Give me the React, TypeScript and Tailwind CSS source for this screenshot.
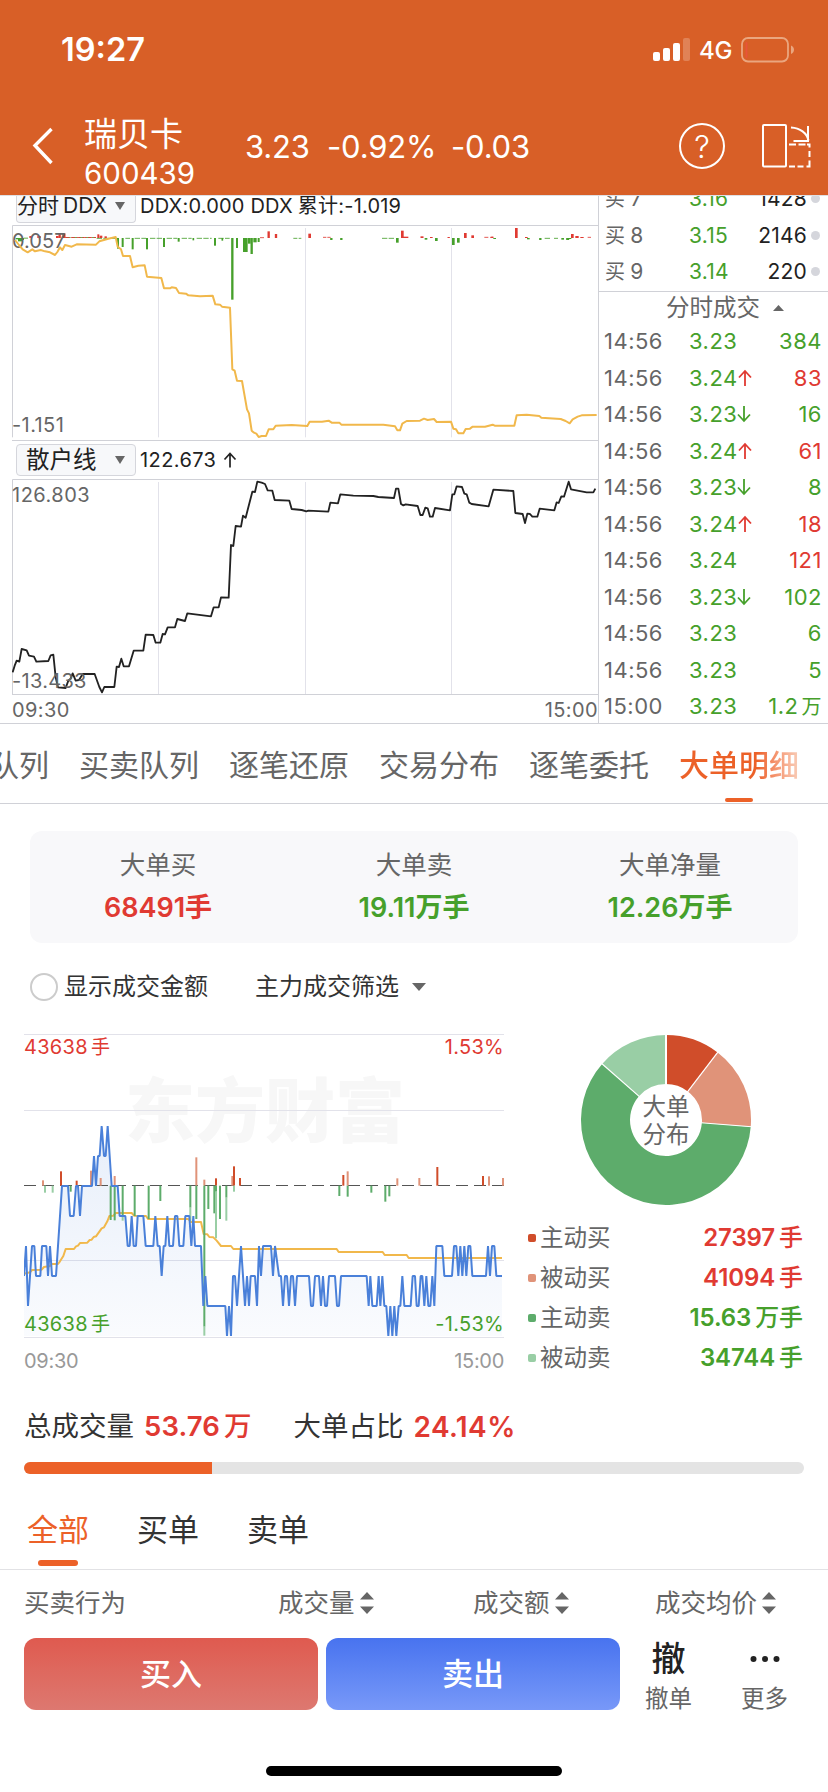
import React from "react";

const TABS = ["买卖队列", "逐笔还原", "交易分布", "逐笔委托"];

const BIDS = [
  { level: "7", price: "3.16", size: "1428" },
  { level: "8", price: "3.15", size: "2146" },
  { level: "9", price: "3.14", size: "220" },
];

type Trade = { time: string; price: string; dir?: "up" | "down"; size: string; unit?: string; buy?: boolean };

const TRADES: Trade[] = [
  { time: "14:56", price: "3.23", size: "384" },
  { time: "14:56", price: "3.24", dir: "up", size: "83", buy: true },
  { time: "14:56", price: "3.23", dir: "down", size: "16" },
  { time: "14:56", price: "3.24", dir: "up", size: "61", buy: true },
  { time: "14:56", price: "3.23", dir: "down", size: "8" },
  { time: "14:56", price: "3.24", dir: "up", size: "18", buy: true },
  { time: "14:56", price: "3.24", size: "121", buy: true },
  { time: "14:56", price: "3.23", dir: "down", size: "102" },
  { time: "14:56", price: "3.23", size: "6" },
  { time: "14:56", price: "3.23", size: "5" },
  { time: "15:00", price: "3.23", size: "1.2", unit: "万" },
];

const LEGEND = [
  { label: "主动买", value: "27397", unit: "手", dot: "bg-[#d04d2a]", text: "text-[#e03a32]" },
  { label: "被动买", value: "41094", unit: "手", dot: "bg-[#e09379]", text: "text-[#e03a32]" },
  { label: "主动卖", value: "15.63", unit: "万手", dot: "bg-[#5dac6b]", text: "text-[#46a02b]" },
  { label: "被动卖", value: "34744", unit: "手", dot: "bg-[#99cea5]", text: "text-[#46a02b]" },
];

const DDX_LINE =
  "45,150 57,165 68,178 83,187 97,178 105,184 122,180 135,184 150,187 165,195 172,186 180,172 187,180 195,165 215,170 230,163 288,164 298,154 325,146 347,141 353,170 363,178 369,198 390,198 398,232 415,227 434,226 441,260 484,264 492,295 510,295 515,292 528,294 537,309 558,311 565,316 600,319 638,317 646,343 660,344 666,350 690,353 697,538 704,542 711,572 726,573 741,658 747,670 755,722 762,728 769,731 776,741 785,738 798,738 806,718 820,718 827,707 875,705 922,708 929,695 966,695 986,692 995,698 1018,698 1024,704 1150,704 1185,709 1192,721 1200,721 1207,701 1220,693 1260,692 1272,686 1283,690 1302,687 1310,696 1353,695 1360,716 1368,718 1375,730 1390,730 1397,717 1410,716 1418,710 1455,710 1478,704 1484,707 1543,707 1550,676 1580,674 1618,678 1624,683 1682,687 1697,693 1709,700 1718,688 1733,680 1745,676 1790,675";

// [x centre, far y, width]
const DDX_GREEN: number[][] = [
  [53, 148, 12], [61, 154, 14], [69, 150, 6], [354, 176, 6], [368, 171, 6], [398, 178, 6], [441, 178, 6], [492, 171, 6],
  [536, 155, 6], [580, 151, 5], [645, 167, 6], [667, 152, 5], [697, 329, 7], [711, 174, 6], [736, 186, 14], [748, 161, 8],
  [755, 192, 7], [765, 157, 10], [776, 156, 6], [994, 150, 7], [1024, 150, 7], [1192, 158, 8], [1278, 149, 8],
  [1309, 153, 8], [1360, 165, 8], [1375, 158, 8], [1484, 147, 8], [1585, 148, 8], [1621, 150, 7], [1688, 149, 8], [1703, 150, 9], [1710, 147, 8],
];
const DDX_RED: number[][] = [
  [92, 138, 8], [117, 138, 10], [172, 138, 8], [179, 130, 7], [192, 130, 9], [295, 133, 6], [303, 137, 8], [317, 139, 7],
  [806, 124, 7], [828, 132, 7], [929, 131, 8], [1207, 122, 8], [1217, 140, 16], [1266, 139, 9], [1294, 141, 8], [1346, 141, 7],
  [1396, 129, 8], [1418, 136, 8], [1477, 140, 7], [1549, 114, 8], [1579, 141, 8], [1717, 132, 8], [1731, 138, 10], [1746, 141, 10],
];

const RETAIL_LINE =
  "38,697 44,677 50,662 58,665 65,627 80,631 87,647 102,650 109,665 145,663 152,646 160,644 167,712 174,742 197,744 205,722 212,716 218,700 227,722 237,720 248,702 284,702 298,741 306,757 313,741 343,741 350,680 357,681 364,656 371,679 387,679 401,632 430,632 437,584 460,585 467,608 481,608 488,582 495,583 503,562 525,562 532,537 555,543 562,520 633,529 641,502 656,502 663,472 686,473 693,315 700,318 707,258 723,260 729,227 737,233 757,155 765,156 772,125 785,128 795,132 803,151 817,152 824,180 868,182 875,207 905,210 919,214 925,212 985,215 991,188 1014,190 1021,163 1060,167 1120,168 1135,171 1182,174 1188,146 1195,146 1203,192 1210,196 1217,193 1253,198 1261,225 1268,225 1276,203 1283,205 1290,230 1298,230 1305,204 1350,211 1357,163 1363,163 1370,139 1386,141 1393,161 1400,163 1408,188 1415,192 1466,199 1480,149 1540,153 1546,219 1568,222 1575,249 1582,221 1590,222 1597,230 1612,230 1619,206 1663,211 1670,187 1676,189 1684,169 1692,170 1706,125 1713,148 1760,157 1780,157 1786,146";

const PRICE_LINE =
  "72,768 78,678 84,858 96,678 103,678 108,768 121,768 126,678 139,678 144,768 150,678 156,768 168,768 186,498 204,498 210,588 221,588 228,498 234,498 240,588 246,498 276,498 282,408 288,498 294,408 299,408 305,318 312,408 317,408 323,318 335,498 353,498 359,588 376,588 383,678 389,678 395,588 401,678 408,678 413,588 430,588 437,678 460,678 466,588 473,678 479,678 485,768 491,678 496,678 502,588 508,678 519,678 525,588 532,588 538,678 550,678 556,588 568,588 574,678 580,588 585,678 603,678 610,858 616,768 622,858 676,858 681,948 687,858 693,948 699,768 705,768 711,858 723,678 735,858 741,768 747,858 752,768 765,768 771,858 777,678 783,768 789,678 813,678 819,768 825,678 837,768 843,768 849,858 855,768 861,768 867,858 873,768 879,768 885,858 891,768 897,768 927,768 933,858 939,858 945,768 957,768 963,858 969,768 975,858 981,858 987,768 1005,768 1011,858 1017,858 1023,768 1100,768 1106,858 1111,768 1117,858 1130,858 1136,768 1141,858 1147,768 1153,858 1159,858 1165,948 1171,858 1177,948 1183,858 1189,948 1196,858 1201,858 1207,768 1213,858 1232,858 1238,768 1245,768 1250,858 1256,858 1262,768 1267,768 1273,858 1279,768 1285,858 1291,858 1297,768 1303,858 1309,678 1327,678 1333,768 1356,768 1362,678 1369,678 1375,768 1381,678 1387,768 1393,678 1399,768 1405,678 1411,678 1417,768 1458,768 1464,678 1470,768 1476,678 1483,678 1489,768 1506,768";

const AVERAGE_LINE =
  "72,761 90,757 96,750 125,749 132,741 150,738 156,732 174,732 180,724 190,708 197,687 222,687 228,679 234,677 240,669 262,668 269,660 275,659 281,651 288,649 305,625 312,622 322,604 328,588 340,587 347,579 395,579 402,587 438,588 444,597 565,597 572,606 603,606 611,642 622,643 628,651 640,652 650,662 663,678 693,678 700,687 1010,687 1016,696 1148,696 1154,705 1220,705 1226,714 1506,714";

// [x centre, y from, y to, colour index]
const ORDER_BARS: number[][] = [
  [129, 481, 497, 1], [183, 454, 497, 0], [230, 482, 497, 0], [273, 452, 497, 1], [302, 474, 497, 1], [344, 468, 497, 1],
  [589, 412, 497, 1], [613, 479, 497, 1], [648, 475, 497, 0], [697, 468, 497, 1], [702, 439, 497, 0], [720, 474, 497, 0],
  [1030, 465, 497, 0], [1043, 454, 497, 1], [1192, 475, 497, 1], [1258, 474, 497, 1], [1312, 441, 497, 0], [1449, 468, 497, 0],
  [1467, 469, 497, 1], [1509, 474, 497, 1], [135, 497, 518, 3], [158, 497, 518, 3], [212, 497, 515, 2], [332, 497, 600, 2],
  [344, 497, 601, 2], [368, 497, 585, 2], [368, 585, 602, 3], [404, 497, 588, 2], [446, 497, 597, 2], [481, 497, 543, 2],
  [571, 497, 563, 2], [571, 563, 605, 3], [589, 497, 597, 2], [613, 497, 920, 2], [613, 920, 947, 3], [625, 497, 567, 2],
  [643, 497, 580, 2], [648, 497, 515, 2], [648, 515, 655, 3], [660, 497, 597, 2], [679, 497, 533, 2], [679, 533, 602, 3],
  [702, 497, 515, 3], [1018, 497, 528, 2], [1043, 497, 530, 2], [1114, 497, 518, 2], [1156, 497, 545, 2], [1168, 497, 529, 2],
];
const ORDER_COLORS = ["#d04d2a", "#e09379", "#5dac6b", "#99cea5"];

const SLICES = [
  { from: 0, to: 37.4, color: "#d04d2a" },
  { from: 37.4, to: 94.5, color: "#e09379" },
  { from: 94.5, to: 311.3, color: "#5dac6b" },
  { from: 311.3, to: 360, color: "#99cea5" },
];

function polar(angle: number, radius: number) {
  const rad = ((angle - 90) * Math.PI) / 180;
  return `${(86 + radius * Math.cos(rad)).toFixed(2)} ${(86 + radius * Math.sin(rad)).toFixed(2)}`;
}

function slicePath(from: number, to: number) {
  const large = to - from > 180 ? 1 : 0;
  return `M${polar(from, 85)}A85 85 0 ${large} 1 ${polar(to, 85)}L${polar(to, 36)}A36 36 0 ${large} 0 ${polar(from, 36)}Z`;
}

function StatusBar() {
  return (
    <div className="flex h-[98px] items-center justify-between pl-[61px] pr-[34px] pt-[3px]">
      <span className="text-[32.500px] font-semibold leading-none">19:27</span>
      <div className="flex items-center pb-[2px]">
        <svg width="37" height="24" viewBox="0 0 37 24" fill="#fff">
          <rect x="0" y="14" width="7" height="9" rx="2" />
          <rect x="10" y="10" width="7" height="13" rx="2" />
          <rect x="20" y="5" width="7" height="18" rx="2" />
          <rect x="30" y="0" width="7" height="23" rx="2" opacity="0.22" />
        </svg>
        <span className="ml-[9px] w-[33px] pt-[2px] text-[24px] font-medium leading-none tracking-[-0.3px]">4G</span>
        <svg className="ml-[9px]" width="53" height="26" viewBox="0 0 53 26" fill="none">
          <rect x="1" y="1" width="46" height="23.5" rx="6" stroke="#eaa67f" strokeWidth="1.8" />
          <path d="M5.5 6v14" stroke="#e8543a" strokeWidth="1.8" strokeLinecap="round" />
          <path d="M50 8.5c4 1.500 4 7 0 8.500z" fill="#eaa67f" />
        </svg>
      </div>
    </div>
  );
}

function Header() {
  return (
    <header className="h-[195px] shrink-0 bg-[#d85f27] text-white">
      <StatusBar />
      <div className="flex h-[96px] items-center pl-[32px]">
        <svg width="21" height="38" viewBox="0 0 21 38" fill="none" stroke="#fff" strokeWidth="3.4">
          <path d="M19.500 2L3 18.500 19.500 36" />
        </svg>
        <div className="ml-[31px] flex w-[161px] flex-col pt-[13px]">
          <span className="text-[33px] leading-[40px]">瑞贝卡</span>
          <span className="text-[29.500px] leading-[38px]">600439</span>
        </div>
        <div className="flex text-[31px] leading-none tracking-[-0.2px]">
          <span className="w-[82px]">3.23</span>
          <span className="w-[124px]">-0.92%</span>
          <span className="w-[149px]">-0.03</span>
        </div>
        <div className="ml-[79px] mr-[37px] flex h-[46px] w-[46px] items-center justify-center rounded-full border-2 border-white text-[31px] font-light leading-none">
          ?
        </div>
        <svg width="50" height="44" viewBox="0 0 50 44" fill="none" stroke="#fff" strokeWidth="2">
          <rect x="1" y="1" width="23" height="41.500" rx="1" />
          <path d="M27 20.500h7M36.500 20.500h7M45 20.500h2.500v3M47.500 27v6M47.500 36.500v6h-3M41.500 42.500h-6M33 42.500h-6" />
          <path d="M29 3.500c9 .5 16 5.500 17.500 13M46 2v15H31.500" />
        </svg>
      </div>
    </header>
  );
}

function Picker({ children, docked }: { children: React.ReactNode; docked?: boolean }) {
  return (
    <div
      className={
        docked
          ? "flex h-[27px] w-[120px] shrink-0 items-center justify-between rounded-b-[4px] border border-t-0 border-[#d5d6dc] bg-[#f7f8fa] pb-[6px] pr-[10px] text-[#222]"
          : "flex h-[32px] w-[120px] shrink-0 items-center justify-between rounded-[4px] border border-[#d5d6dc] bg-[#f7f8fa] pr-[10px] text-[#222]"
      }
    >
      {children}
      <svg width="10" height="8" viewBox="0 0 10 8" fill="#666">
        <path d="M0 0h10L5 8z" />
      </svg>
    </div>
  );
}

function MinuteCharts() {
  return (
    <section className="flex h-[528px] w-[599px] shrink-0 flex-col border-r border-[#d0d1d7]">
      <div className="flex h-[29px] shrink-0 items-start pl-[16px]">
        <Picker docked>
          <span className="whitespace-nowrap text-[21px] leading-[20px]">
            分时<span className="ml-[4px]">DDX</span>
          </span>
        </Picker>
        <span className="ml-[4px] whitespace-nowrap text-[20px] leading-[20px] tracking-[0.2px] text-[#222]">
          DDX:0.000 DDX<span className="ml-[5px]">累计</span>:-1.019
        </span>
      </div>
      <div className="relative ml-[12px] h-[216px] shrink-0">
        <svg className="block" width="586" height="216" viewBox="36 105 1758 648" fill="none">
          <path d="M37.500 742V106.500H1794M36 751.500H1794" stroke="#d0d1d7" strokeWidth="3" />
          <path d="M475.500 114v628M916.500 114v628M1354.500 114v628" stroke="#e2e2ea" strokeWidth="3" />
          <path d="M72 144.500h12M196 142.500h92M290 145h62M376 145h14M404 145h34M450 145h36M500 145h32M545 145h30M590 145h45M655 145h34M880 145h12M896 145h8M1146 145h36M1634 145h20M1662 145h12" stroke="#46a02b" strokeWidth="2.500" strokeDasharray="16 4" />
          <path d="M196 142.500h92M780 143h14M969 142h10M982 142h10M1453 142h26M1763 142h10" stroke="#e03a32" strokeWidth="2.500" strokeDasharray="12 5" />
          {DDX_GREEN.map(([x, y, w]) => (
            <rect key={x} x={x - w / 2} y="144" width={w} height={y - 144} fill="#46a02b" />
          ))}
          {DDX_RED.map(([x, y, w]) => (
            <rect key={x} x={x - w / 2} y={y} width={w} height={144 - y} fill="#e03a32" />
          ))}
        </svg>
        <span className="absolute left-0 top-[6px] text-[20px] leading-[20px] text-[#666]">0.057</span>
        <span className="absolute left-0 top-[190px] text-[20px] leading-[20px] tracking-[0.4px] text-[#666]">-1.151</span>
        <svg className="absolute left-0 top-0" width="586" height="216" viewBox="36 105 1758 648" fill="none">
          <polyline points={DDX_LINE} stroke="#f1b84b" strokeWidth="6" strokeLinejoin="round" />
        </svg>
      </div>
      <div className="flex h-[38px] shrink-0 items-center pl-[16px]">
        <Picker>
          <span className="ml-[9px] whitespace-nowrap text-[23.500px] leading-[32px]">散户线</span>
        </Picker>
        <span className="ml-[4px] flex items-center whitespace-nowrap text-[20px] leading-[32px] tracking-[0.4px] text-[#222]">
          122.673
          <svg className="ml-[7px]" width="14" height="16" viewBox="0 0 14 16" fill="none" stroke="#222" strokeWidth="1.700">
            <path d="M7 15.500V2M1.500 7.500L7 1.500l5.500 6" />
          </svg>
        </span>
      </div>
      <div className="relative ml-[12px] h-[216px] shrink-0">
        <svg className="block" width="586" height="216" viewBox="36 117 1758 648" fill="none">
          <path d="M37.500 763.500V118.500H1794M36 763.500H1794" stroke="#d0d1d7" strokeWidth="3" />
          <path d="M475.500 126v636M916.500 126v636M1354.500 126v636" stroke="#e2e2ea" strokeWidth="3" />
          <polyline points={RETAIL_LINE} stroke="#222" strokeWidth="5.500" strokeLinejoin="round" />
        </svg>
        <span className="absolute left-0 top-[6px] text-[20px] leading-[20px] tracking-[0.5px] text-[#666]">126.803</span>
        <span className="absolute left-0 top-[192px] text-[20px] leading-[20px] tracking-[0.3px] text-[#666]">-13.433</span>
      </div>
      <div className="flex h-[29px] items-center justify-between pl-[12px] text-[20px] tracking-[0.4px] text-[#666]">
        <span>09:30</span>
        <span>15:00</span>
      </div>
    </section>
  );
}

function TradeList() {
  return (
    <section className="flex h-[528px] flex-1 flex-col">
      <div className="flex h-[96px] shrink-0 flex-col justify-end overflow-hidden border-b border-[#d0d1d7] pb-[1px]">
        {BIDS.map((bid) => (
          <div key={bid.level} className="flex h-[36.500px] shrink-0 items-center pl-[6px] pr-[8px] text-[21px] tracking-[0.2px]">
            <span className="w-[84px] text-[20px] text-[#666]">
              买<span className="ml-[5px] text-[21px]">{bid.level}</span>
            </span>
            <span className="text-[#46a02b]">{bid.price}</span>
            <span className="ml-auto text-[#222]">{bid.size}</span>
            <span className="ml-[4px] h-[9px] w-[9px] rounded-full bg-[#d5d6dc]" />
          </div>
        ))}
      </div>
      <div className="flex h-[31px] shrink-0 items-center pl-[67px] pt-[1px] text-[23.500px] text-[#666]">
        分时成交
        <svg className="ml-[13px]" width="11" height="6" viewBox="0 0 11 6" fill="#666">
          <path d="M0 6h11L5.500 0z" />
        </svg>
      </div>
      {TRADES.map((t, i) => (
        <div key={i} className="flex h-[36.500px] shrink-0 items-center pl-[5px] pr-[6px] text-[22px] leading-none tracking-[0.5px]">
          <span className="w-[85px] text-[#666]">{t.time}</span>
          <span className="text-[#46a02b]">{t.price}</span>
          {t.dir && (
            <svg
              className={t.dir === "up" ? "text-[#e03a32]" : "rotate-180 text-[#46a02b]"}
              width="14"
              height="18"
              viewBox="0 0 14 18"
              fill="none"
              stroke="currentColor"
              strokeWidth="1.800"
            >
              <path d="M7 17V2.500M1 8.500L7 2l6 6.500" />
            </svg>
          )}
          <span className={t.buy ? "ml-auto text-[#e03a32]" : "ml-auto text-[#46a02b]"}>
            {t.size}
            {t.unit && <span className="ml-[3px] text-[20px]">{t.unit}</span>}
          </span>
        </div>
      ))}
    </section>
  );
}

function TabBar() {
  return (
    <nav className="flex h-[80px] shrink-0 items-center overflow-hidden border-b border-[#d0d1d7] text-[30px] text-[#666]">
      <span className="ml-[-71px] mr-[30px] shrink-0 pt-[4px]">买卖队列</span>
      {TABS.map((tab) => (
        <span key={tab} className="mr-[30px] shrink-0 pt-[4px]">{tab}</span>
      ))}
      <span className="relative flex h-[79px] shrink-0 flex-col items-center justify-center pt-[4px]">
        <span className="bg-linear-to-r from-[#ec6128] from-65% to-[#f8cdb8] bg-clip-text font-medium text-transparent">大单明细</span>
        <span className="absolute bottom-[1px] h-[4px] w-[28px] rounded-full bg-[#ec6128]" />
      </span>
    </nav>
  );
}

function Summary() {
  const items = [
    { label: "大单买", value: "68491手", color: "text-[#e03a32]" },
    { label: "大单卖", value: "19.11万手", color: "text-[#46a02b]" },
    { label: "大单净量", value: "12.26万手", color: "text-[#46a02b]" },
  ];
  return (
    <div className="mx-[30px] mt-[27px] grid h-[112px] shrink-0 grid-cols-3 rounded-[12px] bg-[#f8f8fa] pt-[13px] text-center">
      {items.map((item) => (
        <div key={item.label} className="flex flex-col">
          <span className="text-[25.500px] leading-[42px] text-[#666]">{item.label}</span>
          <span className={`text-[27px] font-semibold leading-[43px] ${item.color}`}>{item.value}</span>
        </div>
      ))}
    </div>
  );
}

function OrderChart() {
  return (
    <div className="w-[480px] shrink-0">
      <div className="relative h-[304px]">
        <span className="absolute left-[101px] top-[34px] whitespace-nowrap text-[70px] font-black leading-[88px] text-[#f7f7f7]">
          东方财富
        </span>
        <svg className="absolute left-0 top-0" width="480" height="304" viewBox="72 42 1440 912" fill="none">
          <defs>
            <linearGradient id="area" x1="0" y1="0" x2="0" y2="1">
              <stop offset="0" stopColor="#4a80d9" stopOpacity="0.13" />
              <stop offset="1" stopColor="#4a80d9" stopOpacity="0.03" />
            </linearGradient>
          </defs>
          <path d="M72 43.500h1440M72 271.500h1440M72 721.500h1440M72 952.500h1440" stroke="#e2e2ea" strokeWidth="3" />
          <polygon points={`72,948 ${PRICE_LINE} 1506,948`} fill="url(#area)" />
          <path d="M72 496.500h1440" stroke="#555" strokeWidth="3" strokeDasharray="36 18" />
          <polyline points={AVERAGE_LINE} stroke="#f1b84b" strokeWidth="6" strokeLinejoin="round" />
          {ORDER_BARS.map(([x, from, to, color]) => (
            <rect key={`${x}-${from}-${to}`} x={x - 3} y={from} width="6" height={to - from} fill={ORDER_COLORS[color]} />
          ))}
          <polyline points={PRICE_LINE} stroke="#4a80d9" strokeWidth="6" strokeLinejoin="bevel" />
        </svg>
        <span className="absolute left-0 top-[3px] text-[20px] leading-[20px] tracking-[0.3px] text-[#e03a32]">
          43638<span className="ml-[3px] text-[19px]">手</span>
        </span>
        <span className="absolute right-0 top-[3px] text-[20px] leading-[20px] tracking-[0.3px] text-[#e03a32]">1.53%</span>
        <span className="absolute left-0 top-[280px] text-[20px] leading-[20px] tracking-[0.3px] text-[#46a02b]">
          43638<span className="ml-[3px] text-[19px]">手</span>
        </span>
        <span className="absolute right-0 top-[280px] text-[20px] leading-[20px] tracking-[0.3px] text-[#46a02b]">-1.53%</span>
      </div>
      <div className="mt-[13px] flex justify-between text-[20px] leading-[20px] tracking-[-0.3px] text-[#999]">
        <span>09:30</span>
        <span>15:00</span>
      </div>
    </div>
  );
}

function Distribution() {
  return (
    <div className="ml-[24px] w-[275px]">
      <div className="relative ml-[52px] h-[172px] w-[172px]">
        <svg width="172" height="172" viewBox="0 0 172 172" className="block">
          {SLICES.map((s) => (
            <path key={s.color} d={slicePath(s.from, s.to)} fill={s.color} />
          ))}
          {SLICES.map((s) => (
            <path key={s.color} d={`M${polar(s.from, 86)}L${polar(s.from, 35)}`} stroke="#fff" strokeWidth={s.from === 0 ? 2 : 1.2} />
          ))}
        </svg>
        <div className="absolute inset-0 flex flex-col items-center justify-center pt-[2px] text-[23.500px] leading-[28px] text-[#666]">
          <span>大单</span>
          <span>分布</span>
        </div>
      </div>
      <div className="mt-[12px]">
        {LEGEND.map((row) => (
          <div key={row.label} className="flex h-[40px] items-center text-[24px]">
            <span className={`h-[8px] w-[8px] rounded-[2px] ${row.dot}`} />
            <span className="ml-[4px] text-[23.500px] text-[#666]">{row.label}</span>
            <span className={`ml-auto font-semibold tracking-[-0.1px] ${row.text}`}>
              {row.value}
              <span className="ml-[4px] font-medium">{row.unit}</span>
            </span>
          </div>
        ))}
      </div>
    </div>
  );
}

function SortIcon() {
  return (
    <svg className="ml-[5px]" width="14" height="22" viewBox="0 0 14 22" fill="#666">
      <path d="M0 7.500h14L7 0zM0 14.500h14L7 22z" />
    </svg>
  );
}

function ListSection() {
  return (
    <>
      <div className="flex h-[50px] shrink-0 items-center px-[24px] pt-[2px] text-[27.500px] text-[#333]">
        <span>总成交量</span>
        <span className="ml-[10px] font-semibold tracking-[0.1px] text-[#e03a32]">
          53.76<span className="ml-[4px] font-medium">万</span>
        </span>
        <span className="ml-[42px]">大单占比</span>
        <span className="ml-[10px] text-[28px] font-semibold tracking-[0.4px] text-[#e03a32]">24.14%</span>
      </div>
      <div className="mx-[24px] mt-[11px] h-[12px] shrink-0 overflow-hidden rounded-full bg-[#e4e4e4]">
        <div className="h-full w-[188px] bg-[#ec6128]" />
      </div>
      <div className="flex h-[96px] shrink-0 border-b border-[#e2e2e5] pl-[27px] text-[31px] text-[#333]">
        <div className="relative mr-[48px] flex h-[112px] items-center justify-center text-[#ec6128]">
          全部
          <span className="absolute bottom-[20px] h-[6px] w-[40px] rounded-full bg-[#ec6128]" />
        </div>
        <div className="mr-[48px] flex h-[112px] items-center">买单</div>
        <div className="flex h-[112px] items-center">卖单</div>
      </div>
      <div className="flex h-[68px] shrink-0 items-center pb-[2px] pl-[24px] text-[25.500px] text-[#666]">
        <span className="w-[254px]">买卖行为</span>
        <span className="flex w-[195px] items-center">成交量<SortIcon /></span>
        <span className="flex w-[182px] items-center">成交额<SortIcon /></span>
        <span className="flex items-center">成交均价<SortIcon /></span>
      </div>
    </>
  );
}

function ActionBar() {
  return (
    <footer className="flex h-[72px] shrink-0 pl-[24px]">
      <button className="h-[72px] w-[294px] rounded-[12px] bg-linear-to-b from-[#df5a4f] to-[#dd7870] text-[31px] font-medium text-white">买入</button>
      <button className="ml-[8px] h-[72px] w-[294px] rounded-[12px] bg-linear-to-b from-[#4873ef] to-[#7898f8] text-[31px] font-medium text-white">卖出</button>
      <div className="flex w-[97px] flex-col items-center text-[#222]">
        <span className="h-[45px] shrink-0 pt-[1px] text-[34px] font-medium leading-[40px]">撤</span>
        <span className="shrink-0 text-[23.500px] leading-[32px] text-[#666]">撤单</span>
      </div>
      <div className="flex w-[95px] flex-col items-center">
        <span className="flex h-[45px] shrink-0 items-start pt-[6px]">
          <svg width="30" height="30" viewBox="0 0 30 30" fill="#222">
            <circle cx="3.500" cy="15" r="3" />
            <circle cx="15" cy="15" r="3" />
            <circle cx="26.500" cy="15" r="3" />
          </svg>
        </span>
        <span className="shrink-0 text-[23.500px] leading-[32px] text-[#666]">更多</span>
      </div>
    </footer>
  );
}

export default function App() {
  return (
    <div className="flex h-[1792px] w-[828px] flex-col overflow-hidden bg-white font-['Inter','Noto_Sans_CJK_SC',sans-serif]">
      <Header />
      <div className="flex h-[529px] shrink-0 border-b border-t border-b-[#d0d1d7] border-t-[#dfe0e4]">
        <MinuteCharts />
        <TradeList />
      </div>
      <TabBar />
      <Summary />
      <div className="flex h-[91px] shrink-0 items-center pb-[4px] pl-[30px] text-[24px] text-[#333]">
        <span className="h-[28px] w-[28px] rounded-full border-2 border-[#ccc]" />
        <span className="ml-[6px]">显示成交金额</span>
        <span className="ml-[47px]">主力成交筛选</span>
        <svg className="ml-[13px]" width="14" height="8" viewBox="0 0 14 8" fill="#666">
          <path d="M0 0h14L7 8z" />
        </svg>
      </div>
      <div className="flex h-[367px] shrink-0 pl-[24px]">
        <OrderChart />
        <Distribution />
      </div>
      <ListSection />
      <ActionBar />
      <div className="mx-auto mt-[56px] h-[10px] w-[296px] shrink-0 rounded-full bg-black" />
    </div>
  );
}
